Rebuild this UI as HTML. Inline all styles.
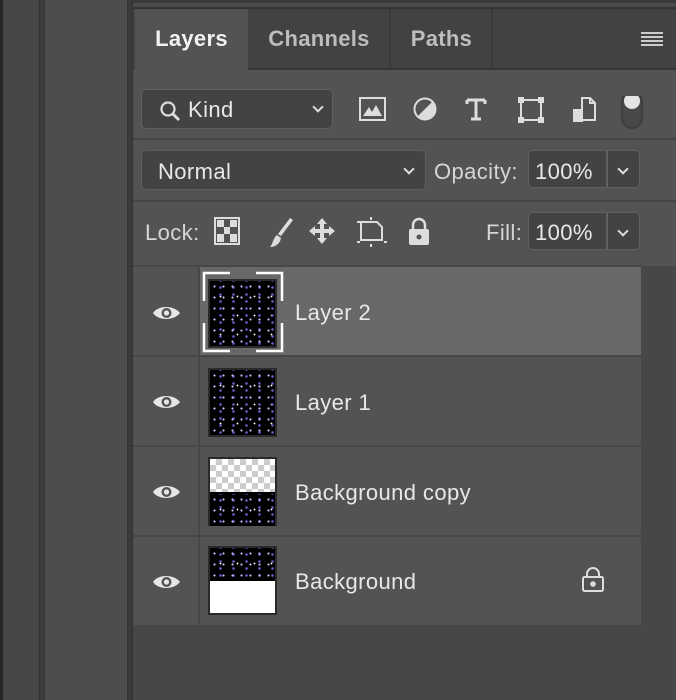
<!DOCTYPE html>
<html><head><style>
*{margin:0;padding:0;box-sizing:border-box}
body{width:676px;height:700px;background:#474747;position:relative;overflow:hidden;font-family:"Liberation Sans",sans-serif;color:#e8e8e8}
.a{position:absolute}
.t{font-size:22px;letter-spacing:0.4px}
.dd{position:absolute;background:#434343;border:1.5px solid #5f5f5f;border-radius:5px}
.chev{position:absolute;width:8px;height:8px;border-right:2px solid #ddd;border-bottom:2px solid #ddd;transform:rotate(45deg)}
.row{position:absolute;left:133px;width:508px;height:88px;background:#535353}
.stars{background-color:#000;background-image:radial-gradient(circle,#c8c0ff 0.8px,transparent 1.3px),radial-gradient(circle,#6a5cc8 1px,transparent 1.6px),radial-gradient(circle,#fff 0.7px,transparent 1.1px);background-size:9px 11px,13px 7px,17px 19px;background-position:0 0,4px 3px,2px 6px}
.checker{background-color:#fff;background-image:linear-gradient(45deg,#ccc 25%,transparent 25%,transparent 75%,#ccc 75%),linear-gradient(45deg,#ccc 25%,transparent 25%,transparent 75%,#ccc 75%);background-size:12px 12px;background-position:0 0,6px 6px}
</style></head><body>
<div class="a" style="left:0;top:0;width:3px;height:700px;background:#262626"></div>
<div class="a" style="left:3px;top:0;width:36px;height:700px;background:#474747"></div>
<div class="a" style="left:39px;top:0;width:6px;height:700px;background:#3c3c3c;border-left:1px solid #333;border-right:1px solid #333"></div>
<div class="a" style="left:45px;top:0;width:82px;height:700px;background:#4d4d4d"></div>
<div class="a" style="left:127px;top:0;width:6px;height:700px;background:#3a3a3a;border-left:1px solid #333;border-right:1px solid #333"></div>
<div class="a" style="left:133px;top:0;width:543px;height:3px;background:#3a3a3a"></div>
<div class="a" style="left:133px;top:3px;width:543px;height:4px;background:#4a4a4a"></div>
<div class="a" style="left:133px;top:7px;width:543px;height:2px;background:#333"></div>
<div class="a" style="left:133px;top:9px;width:543px;height:61px;background:#424242"></div>
<div class="a" style="left:135px;top:9px;width:113px;height:61px;background:#535353;font-weight:bold;font-size:22px;text-align:center;line-height:60px;color:#f2f2f2;letter-spacing:0.3px">Layers</div>
<div class="a" style="left:249px;top:9px;width:142px;height:60px;border-right:2px solid #3a3a3a;font-weight:bold;font-size:22px;text-align:center;line-height:60px;color:#bdbdbd;letter-spacing:0.3px">Channels</div>
<div class="a" style="left:392px;top:9px;width:101px;height:60px;border-right:2px solid #3a3a3a;font-weight:bold;font-size:22px;text-align:center;line-height:60px;color:#bdbdbd;letter-spacing:0.3px">Paths</div>
<div class="a" style="left:248px;top:68px;width:428px;height:2px;background:#363636"></div>
<div class="a" style="left:641px;top:32px;width:22px;height:14px;background:repeating-linear-gradient(#ccc 0 2px,transparent 2px 4px)"></div>
<div class="a" style="left:133px;top:70px;width:543px;height:196px;background:#535353"></div>
<div class="a" style="left:133px;top:138px;width:543px;height:2px;background:#444"></div>
<div class="a" style="left:133px;top:200px;width:543px;height:2px;background:#444"></div>
<div class="dd" style="left:141px;top:89px;width:192px;height:40px"></div>
<svg class="a" style="left:158px;top:99px" width="24" height="24"><circle cx="10" cy="10" r="6.5" fill="none" stroke="#ddd" stroke-width="2.2"/><line x1="15" y1="15" x2="21" y2="21" stroke="#ddd" stroke-width="3"/></svg>
<div class="a t" style="left:188px;top:97px">Kind</div>
<div class="chev" style="left:314px;top:103px"></div>
<svg class="a" style="left:358px;top:96px" width="290" height="40" fill="none" stroke="#ddd" stroke-width="2">
<rect x="2" y="2" width="25" height="22"/><path d="M5 20 L11 11 L14 16 L18 9 L24 20 Z" fill="#ddd" stroke="none"/>
<circle cx="67" cy="13" r="10.5"/><path d="M67 2.5 A10.5 10.5 0 0 1 67 23.5 Z" transform="rotate(45 67 13)" fill="#ddd" stroke="none"/>
<path d="M109 4 H127 M118 4 V23 M113 23 H123 M109 4 V8 M127 4 V8" stroke-width="3"/>
<rect x="163" y="4" width="20" height="20"/><g fill="#ddd" stroke="none"><rect x="160" y="1" width="6" height="6"/><rect x="180" y="1" width="6" height="6"/><rect x="160" y="21" width="6" height="6"/><rect x="180" y="21" width="6" height="6"/></g>
<path d="M224 14 V2 H232 L237 7 V24 H225 M232 2 V7 H237"/><rect x="215" y="13" width="10" height="13" fill="#ddd" stroke="none"/>
<rect x="264" y="-4" width="20" height="36" rx="10" stroke="#3e3e3e" fill="#484848"/><circle cx="274" cy="5" r="8" fill="#e5e5e5" stroke="none"/>
</svg>
<div class="dd" style="left:141px;top:150px;width:285px;height:40px"></div>
<div class="a t" style="left:158px;top:159px">Normal</div>
<div class="chev" style="left:405px;top:165px"></div>
<div class="a t" style="left:434px;top:159px;color:#d6d6d6">Opacity:</div>
<div class="dd" style="left:528px;top:150px;width:112px;height:38px"></div>
<div class="a" style="left:606px;top:151px;width:2px;height:36px;background:#5f5f5f"></div>
<div class="a t" style="left:535px;top:159px">100%</div>
<div class="chev" style="left:619px;top:165px"></div>
<div class="a t" style="left:145px;top:220px;color:#d6d6d6">Lock:</div>
<svg class="a" style="left:214px;top:216px" width="230" height="34" fill="#ddd" stroke="none">
<rect x="1" y="2" width="24" height="26" fill="none" stroke="#ddd" stroke-width="2"/><rect x="3" y="4" width="7" height="7"/><rect x="16" y="4" width="7" height="7"/><rect x="10" y="11" width="6" height="7"/><rect x="3" y="18" width="7" height="8"/><rect x="16" y="18" width="7" height="8"/>
<path d="M76 2 L79 4 L67 20 L64 18 Z M63 19 L67 22 C66 28 61 31 56 31 C59 28 59 22 63 19 Z"/>
<path d="M108 2 L113 8 H110 V13 H115 V10 L121 15 L115 20 V17 H110 V22 H113 L108 28 L103 22 H106 V17 H101 V20 L95 15 L101 10 V13 H106 V8 H103 Z"/>
<path d="M147 6 H163 L168 11 V24 H147 Z" fill="none" stroke="#ddd" stroke-width="2"/><g><rect x="143" y="5" width="3" height="2"/><rect x="143" y="25" width="3" height="2"/><rect x="170" y="25" width="3" height="2"/><rect x="156" y="1" width="2" height="3"/><rect x="156" y="28" width="2" height="3"/></g>
<path d="M199 13 V9 A6 6 0 0 1 211 9 V13" fill="none" stroke="#ddd" stroke-width="2.5"/><rect x="195" y="13" width="20" height="16" rx="2"/><circle cx="205" cy="21" r="2.5" fill="#535353"/>
</svg>
<div class="a t" style="left:486px;top:220px;color:#d6d6d6">Fill:</div>
<div class="dd" style="left:528px;top:212px;width:112px;height:38px"></div>
<div class="a" style="left:606px;top:213px;width:2px;height:36px;background:#5f5f5f"></div>
<div class="a t" style="left:535px;top:220px">100%</div>
<div class="chev" style="left:619px;top:227px"></div>
<div class="a" style="left:133px;top:265px;width:508px;height:2px;background:#474747"></div>
<div class="a" style="left:641px;top:266px;width:35px;height:434px;background:#474747"></div>
<div class="row" style="top:267px"><div class="a" style="left:67px;top:0;width:441px;height:88px;background:#686868"></div></div>
<div class="row" style="top:357px"></div>
<div class="row" style="top:447px"></div>
<div class="row" style="top:537px"></div>
<div class="a" style="left:133px;top:355px;width:508px;height:2px;background:#474747"></div>
<div class="a" style="left:133px;top:445px;width:508px;height:2px;background:#474747"></div>
<div class="a" style="left:133px;top:535px;width:508px;height:2px;background:#474747"></div>
<div class="a" style="left:133px;top:625px;width:508px;height:2px;background:#474747"></div>
<div class="a" style="left:198px;top:267px;width:2px;height:358px;background:#474747"></div>
<svg class="a" style="left:152px;top:303px" width="30" height="300" fill="#e6e6e6">
<g id="e"><path d="M1 10 C6 2 22 2 28 10 C22 18 6 18 1 10Z"/><circle cx="14.5" cy="10" r="5" fill="#535353"/><circle cx="14.5" cy="10" r="2.6"/></g>
<use href="#e" y="89"/><use href="#e" y="179"/><use href="#e" y="269"/>
</svg>
<div class="a stars" style="left:208px;top:279px;width:69px;height:69px;border:2px solid #2a2a2a"></div>
<svg class="a" style="left:202px;top:271px" width="82" height="82" fill="none" stroke="#fff" stroke-width="2.5"><path d="M2 30 V2 H28 M54 2 H80 V30 M80 52 V80 H54 M28 80 H2 V52"/></svg>
<div class="a stars" style="left:208px;top:368px;width:69px;height:69px;border:2px solid #2a2a2a"></div>
<div class="a" style="left:208px;top:457px;width:69px;height:69px;border:2px solid #2a2a2a;background:#000"><div class="checker" style="height:33px"></div><div class="stars" style="height:32px;margin-top:2px"></div></div>
<div class="a" style="left:208px;top:546px;width:69px;height:69px;border:2px solid #2a2a2a;background:#000"><div class="stars" style="height:33px"></div><div style="height:32px;background:#fff"></div></div>
<div class="a t" style="left:295px;top:300px">Layer 2</div>
<div class="a t" style="left:295px;top:390px">Layer 1</div>
<div class="a t" style="left:295px;top:480px">Background copy</div>
<div class="a t" style="left:295px;top:569px">Background</div>
<svg class="a" style="left:581px;top:567px" width="24" height="26" fill="none" stroke="#ddd" stroke-width="2"><path d="M6 10 V7 A6 6 0 0 1 18 7 V10"/><rect x="2" y="10" width="20" height="14" rx="1.5"/><circle cx="12" cy="17" r="1.8" fill="#ddd"/></svg>
</body></html>
